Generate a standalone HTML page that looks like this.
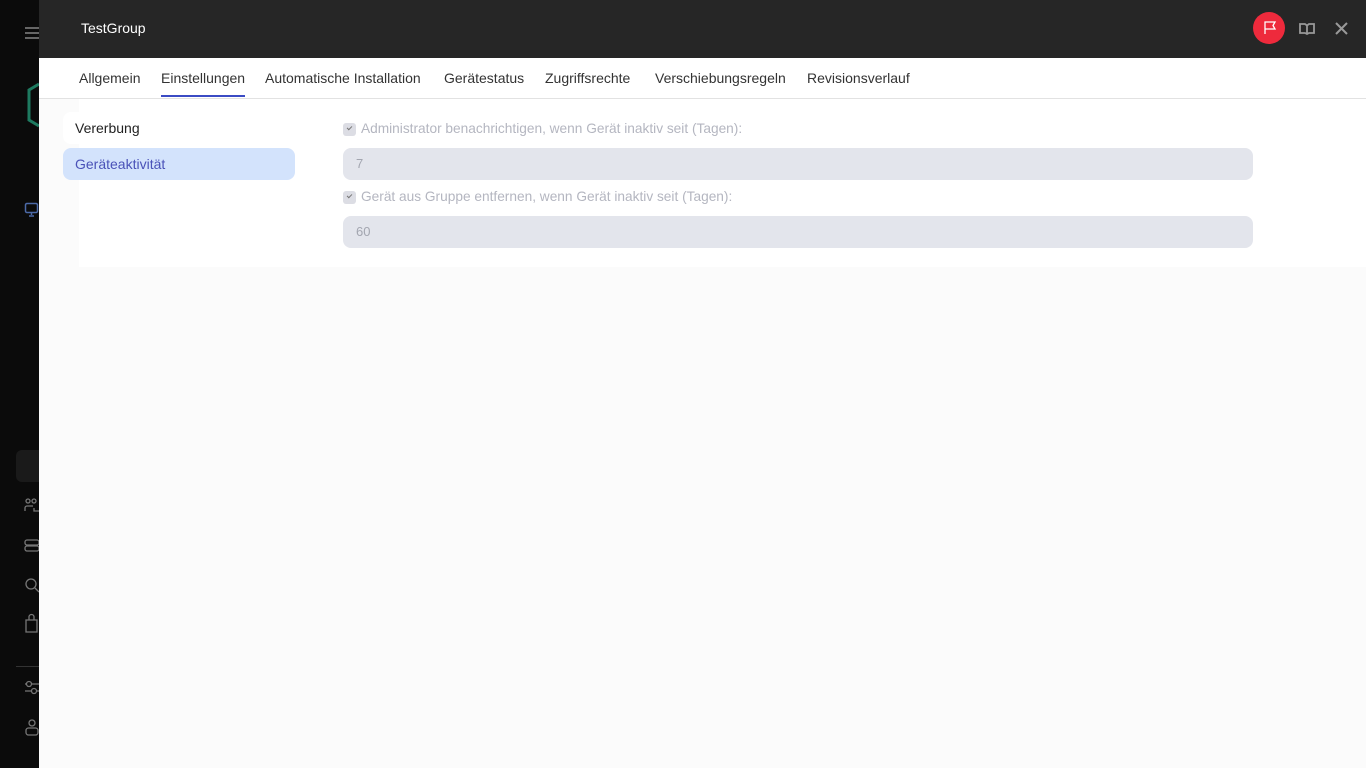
<!DOCTYPE html>
<html><head><meta charset="utf-8"><style>
*{margin:0;padding:0;box-sizing:border-box}
body{width:1366px;height:768px;overflow:hidden;background:#0b0b0b;font-family:"Liberation Sans",sans-serif;position:relative}
.side{position:absolute;left:0;top:0;width:39px;height:768px;background:#0b0b0b}
.main{position:absolute;left:39px;top:0;width:1327px;height:768px;background:#fbfbfb}
.top{height:58px;background:#262626;position:relative}
.top .t{position:absolute;left:42px;top:20px;color:#fff;font-size:14px}
.tabs{height:41px;background:#fff;border-bottom:1px solid #e2e2e2;position:relative}
.tabs span{position:absolute;top:12px;font-size:14px;color:#333}
.ul{position:absolute;left:122px;top:37px;width:84px;height:2px;background:#3b4bc4}
.panel{position:absolute;left:40px;top:99px;width:1287px;height:168px;background:#fff}
.lm{position:absolute;left:24px;width:232px;height:32px;border-radius:8px;font-size:14px;padding:8px 12px;color:#222}
.lbl{position:absolute;left:304px;font-size:13.7px;color:#b4b6c0}
.cb{position:absolute;left:304px;width:13px;height:13px;border-radius:3px;background:#dcdde4}
.cb:after{content:"";position:absolute;left:4px;top:3px;width:4px;height:2px;border-left:1.5px solid #777;border-bottom:1.5px solid #777;transform:rotate(-45deg)}
.inp{position:absolute;left:304px;width:910px;height:32px;border-radius:8px;background:#e3e5ec;font-size:13px;color:#a3a6b0;padding:8px 13px}
</style></head><body>
<div class="side">
<div style="position:absolute;left:25px;top:27px;width:14px;height:2px;background:#666;box-shadow:0 5px 0 #666,0 10px 0 #666"></div>
<svg style="position:absolute;left:26px;top:82px" width="13" height="48"><path d="M13 2 L3 8 V38 L13 44" fill="none" stroke="#1e7a60" stroke-width="3"/></svg>
<svg style="position:absolute;left:24px;top:202px" width="15" height="15"><rect x="1.5" y="1.5" width="12" height="9" rx="1.5" fill="none" stroke="#4c6aa8" stroke-width="1.5"/><path d="M7.5 11v2M5 14h5" stroke="#4c6aa8" stroke-width="1.5"/></svg>
<div style="position:absolute;left:16px;top:450px;width:30px;height:32px;border-radius:6px;background:#1a1a1a"></div>
<svg style="position:absolute;left:24px;top:498px" width="15" height="140" fill="none" stroke="#777" stroke-width="1.3">
<circle cx="4" cy="3" r="2"/><circle cx="10" cy="3" r="2"/><path d="M1 13v-3a2 2 0 0 1 2-2h6M15 13H10v-3"/>
<rect x="1" y="42" width="14" height="5" rx="2"/><rect x="1" y="48" width="14" height="5" rx="2"/>
<circle cx="7" cy="86" r="5"/><path d="M11 90l4 4"/>
<path d="M2 122h11v12H2zM5 122v-3a2.5 2.5 0 0 1 5 0v3"/>
</svg>
<div style="position:absolute;left:16px;top:666px;width:23px;height:1px;background:#333"></div>
<svg style="position:absolute;left:24px;top:678px" width="15" height="60" fill="none" stroke="#777" stroke-width="1.3">
<path d="M1 6h14M1 13h14"/><circle cx="5" cy="6" r="2.5" fill="#0b0b0b"/><circle cx="10" cy="13" r="2.5" fill="#0b0b0b"/>
<circle cx="8" cy="45" r="3"/><rect x="2" y="50" width="12" height="7" rx="2.5"/>
</svg>
</div>
<div class="main">
<div class="top"><div class="t">TestGroup</div>
<div style="position:absolute;left:1214px;top:12px;width:32px;height:32px;border-radius:50%;background:#ee2a3c"></div>
<svg style="position:absolute;left:1224px;top:20px" width="14" height="15" fill="none" stroke="#fff" stroke-width="1.3"><path d="M2 14V2h10l-2 3.5 2 3.5H2"/></svg>
<svg style="position:absolute;left:1260px;top:22px" width="16" height="13" fill="none" stroke="#999" stroke-width="1.8"><path d="M1 2h5l2 1.5L10 2h5v9H10l-2 1-2-1H1zM8 3v9"/></svg>
<svg style="position:absolute;left:1296px;top:22px" width="13" height="13" stroke="#999" stroke-width="2"><path d="M1 1l11 11M12 1L1 12"/></svg>
</div>
<div class="tabs">
<span style="left:40px">Allgemein</span>
<span style="left:122px">Einstellungen</span>
<span style="left:226px">Automatische Installation</span>
<span style="left:405px">Gerätestatus</span>
<span style="left:506px">Zugriffsrechte</span>
<span style="left:616px">Verschiebungsregeln</span>
<span style="left:768px">Revisionsverlauf</span>
<div class="ul"></div>
</div>
<div class="panel"></div>
<div class="lm" style="top:112px;background:#fff">Vererbung</div>
<div class="lm" style="top:148px;background:#d3e3fc;color:#4a52b8">Geräteaktivität</div>
<div class="cb" style="top:123px"></div><div class="lbl" style="left:322px;top:121px">Administrator benachrichtigen, wenn Gerät inaktiv seit (Tagen):</div>
<div class="inp" style="top:148px">7</div>
<div class="cb" style="top:191px"></div><div class="lbl" style="left:322px;top:189px">Gerät aus Gruppe entfernen, wenn Gerät inaktiv seit (Tagen):</div>
<div class="inp" style="top:216px">60</div>
</div>
</body></html>
